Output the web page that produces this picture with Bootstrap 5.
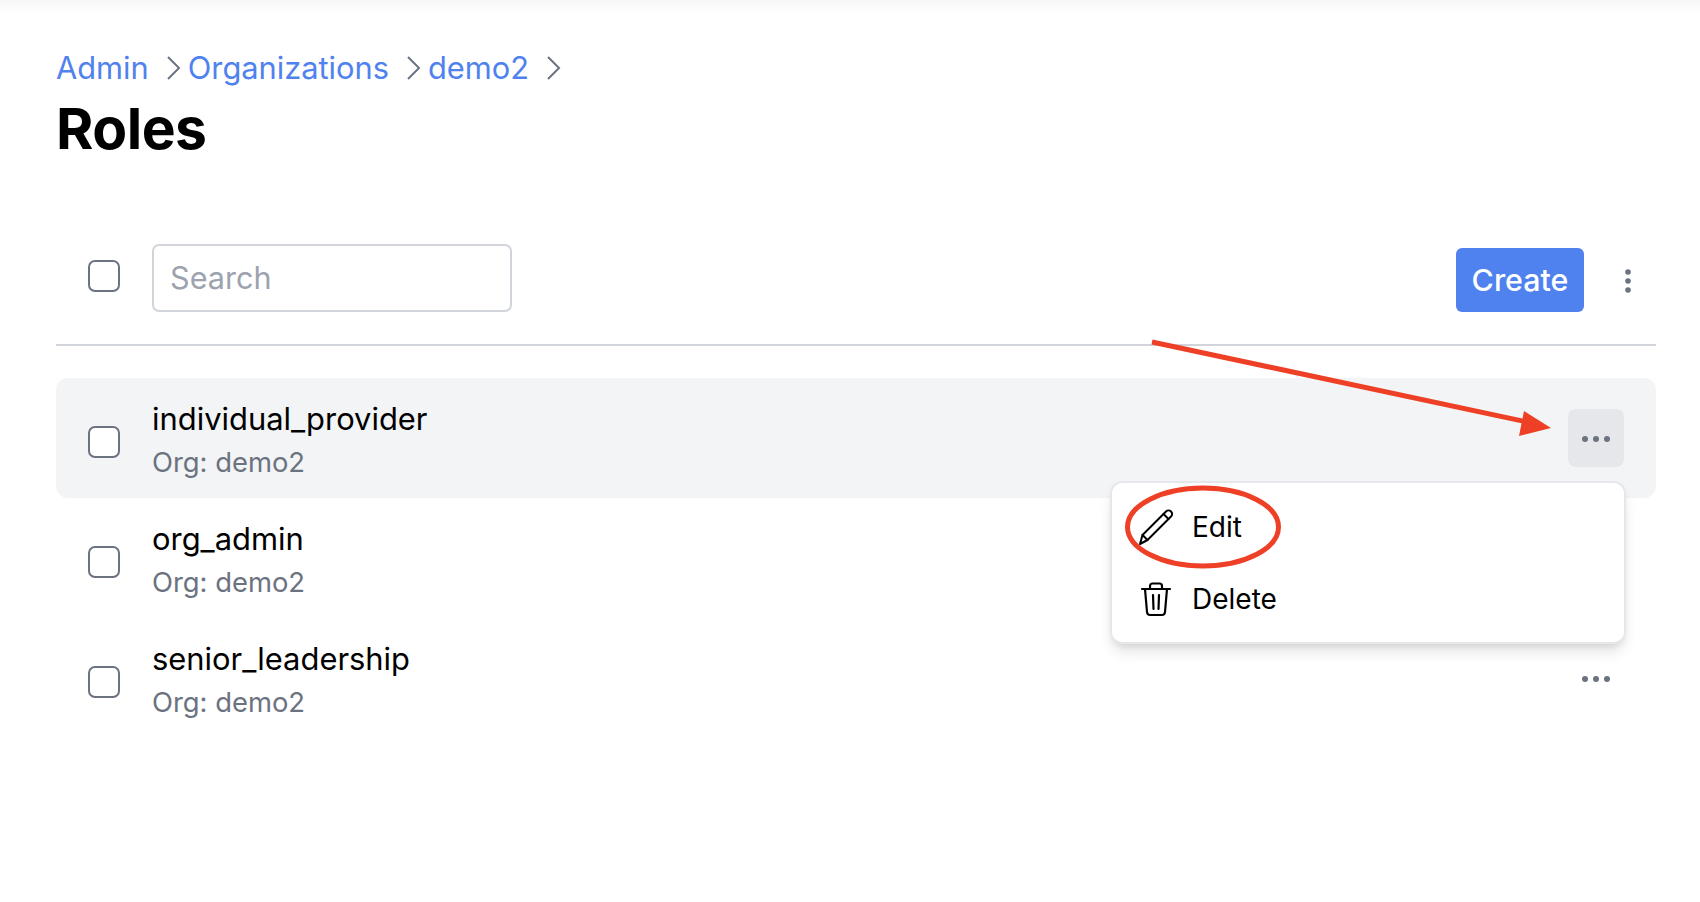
<!doctype html>
<html lang="en">
<head>
<meta charset="utf-8">
<title>Roles</title>
<link href="https://cdn.jsdelivr.net/npm/bootstrap@5.3.0/dist/css/bootstrap.min.css" rel="stylesheet">
<style>
html,body{height:100%}
body{font-family:"Inter","Liberation Sans",sans-serif;color:#000;background:#fff;position:relative;overflow:hidden}
.top-fade{height:14px;background:linear-gradient(#f6f6f7,#fff)}
.page-wrap{padding:31px 44px 0 56px}
.crumbs{font-size:30.8px;line-height:46px;margin:0;gap:0}
.crumbs a{color:#4f82ee;text-decoration:none}
.crumbs svg{width:20px;height:28px;margin:0 4px 0 15px;color:#6b7280;flex:none}
.page-title{font-size:57px;font-weight:700;line-height:64px;letter-spacing:-.5px;margin:6px 0 0}
.tool-row{height:135px;padding:0 0 0 32px;margin-top:50px;border-bottom:2px solid #d1d5db}
.row-check.form-check-input{width:32px;height:32px;margin:-4px 32px 0 0;border:2px solid #6b7280;border-radius:7px;background-color:#fff;flex:none}
.role-row .row-check.form-check-input{margin-top:7px}
.search-box.form-control{width:360px;height:68px;font-size:30.6px;padding:0 16px;border:2px solid #d1d5db;border-radius:7px;color:#000}
.search-box.form-control::placeholder{color:#9ca3af}
.create-btn.btn{width:128px;height:64px;padding:2px 0 0;background:#4f82ee;border:0;color:#fff;font-size:30.4px;font-weight:500;border-radius:6px;margin-top:5px}
.kebab{width:72px;padding-left:40px;margin-top:6px;color:#6b7280}
.role-list{margin-top:32px;position:relative}
.role-row{height:120px;padding:0 32px;position:relative}
.role-row.active-row{background:#f3f4f6;border-radius:12px}
.role-name{font-size:30.9px;line-height:43px}
.role-org{font-size:27.4px;line-height:44px;color:#6b7280}
.role-text{margin-top:5px}
.dots-btn{width:56px;height:58px;border-radius:8px;margin-top:-1px;padding-top:2px;color:#6b7280}
.active-row .dots-btn{background:#e5e7eb}
.action-menu{position:absolute;left:1054px;top:103px;width:516px;height:163px;background:#fff;border:2px solid #e5e7eb;border-radius:12px;box-shadow:0 10px 15px -3px rgba(0,0,0,.12),0 4px 6px -2px rgba(0,0,0,.08);z-index:2;padding:1px 0 0 26px;display:flex;flex-direction:column;justify-content:center}
.menu-line{height:72px;font-size:28px;gap:18px}
.menu-line svg{width:36px;height:36px;flex:none}
.notes{position:absolute;left:0;top:0;z-index:3;pointer-events:none}
</style>
</head>
<body>
<div class="top-fade"></div>
<div class="page-wrap">
  <nav class="crumbs d-flex align-items-center">
    <a href="#">Admin</a>
    <svg viewBox="0 0 20 28" fill="none" stroke="currentColor" stroke-width="2"><path d="M4 3l11 11L4 25"/></svg>
    <a href="#">Organizations</a>
    <svg viewBox="0 0 20 28" fill="none" stroke="currentColor" stroke-width="2"><path d="M4 3l11 11L4 25"/></svg>
    <a href="#">demo2</a>
    <svg viewBox="0 0 20 28" fill="none" stroke="currentColor" stroke-width="2"><path d="M4 3l11 11L4 25"/></svg>
  </nav>
  <h1 class="page-title">Roles</h1>

  <div class="tool-row d-flex align-items-center">
    <input class="form-check-input row-check" type="checkbox" aria-label="Select all">
    <input class="form-control search-box" type="text" placeholder="Search">
    <div class="ms-auto d-flex align-items-center">
      <button class="btn create-btn" type="button">Create</button>
      <div class="kebab d-flex">
        <svg width="8" height="28" viewBox="0 0 8 28" fill="currentColor"><circle cx="4" cy="5" r="2.8"/><circle cx="4" cy="14" r="2.8"/><circle cx="4" cy="23" r="2.8"/></svg>
      </div>
    </div>
  </div>

  <div class="role-list">
    <div class="role-row active-row d-flex align-items-center">
      <input class="form-check-input row-check" type="checkbox" aria-label="Select individual_provider">
      <div class="role-text">
        <div class="role-name">individual_provider</div>
        <div class="role-org">Org: demo2</div>
      </div>
      <div class="dots-btn ms-auto d-flex align-items-center justify-content-center">
        <svg width="30" height="8" viewBox="0 0 30 8" fill="currentColor"><circle cx="4" cy="4" r="3"/><circle cx="15" cy="4" r="3"/><circle cx="26" cy="4" r="3"/></svg>
      </div>
    </div>
    <div class="role-row d-flex align-items-center">
      <input class="form-check-input row-check" type="checkbox" aria-label="Select org_admin">
      <div class="role-text">
        <div class="role-name">org_admin</div>
        <div class="role-org">Org: demo2</div>
      </div>
    </div>
    <div class="role-row d-flex align-items-center">
      <input class="form-check-input row-check" type="checkbox" aria-label="Select senior_leadership">
      <div class="role-text">
        <div class="role-name">senior_leadership</div>
        <div class="role-org">Org: demo2</div>
      </div>
      <div class="dots-btn ms-auto d-flex align-items-center justify-content-center">
        <svg width="30" height="8" viewBox="0 0 30 8" fill="currentColor"><circle cx="4" cy="4" r="3"/><circle cx="15" cy="4" r="3"/><circle cx="26" cy="4" r="3"/></svg>
      </div>
    </div>
    <div class="action-menu">
      <div class="menu-line d-flex align-items-center">
        <svg viewBox="0 0 36 36" fill="none" stroke="#000" stroke-width="2" stroke-linejoin="round" stroke-linecap="round"><path d="M2 35l2.500-9L28 2.500c1.500-1.500 3.500-1.500 5 0s1.500 3.500 0 5L9.500 31z"/><path d="M4.500 26l5 5M25.500 5l5 5"/></svg>
        <span>Edit</span>
      </div>
      <div class="menu-line d-flex align-items-center">
        <svg viewBox="0 0 36 36" fill="none" stroke="#000" stroke-width="2.200" stroke-linejoin="round" stroke-linecap="round"><path d="M4 8h28M12 8V5c0-1.500 1-2.500 2.500-2.500h7C23 2.500 24 3.500 24 5v3M7 8l2 23c.2 2 1.500 3 3 3h12c1.500 0 2.800-1 3-3l2-23M15 14l.5 14M21 14l-.5 14"/></svg>
        <span>Delete</span>
      </div>
    </div>
  </div>
</div>
<svg class="notes" width="1700" height="902" viewBox="0 0 1700 902">
  <path d="M1152 342L1532 423" stroke="#ee4026" stroke-width="5" fill="none"/>
  <path d="M1551 428L1524 411L1519 436z" fill="#ee4026"/>
  <ellipse cx="1203" cy="527" rx="75.500" ry="39" fill="none" stroke="#ee4026" stroke-width="5"/>
</svg>
</body>
</html>
